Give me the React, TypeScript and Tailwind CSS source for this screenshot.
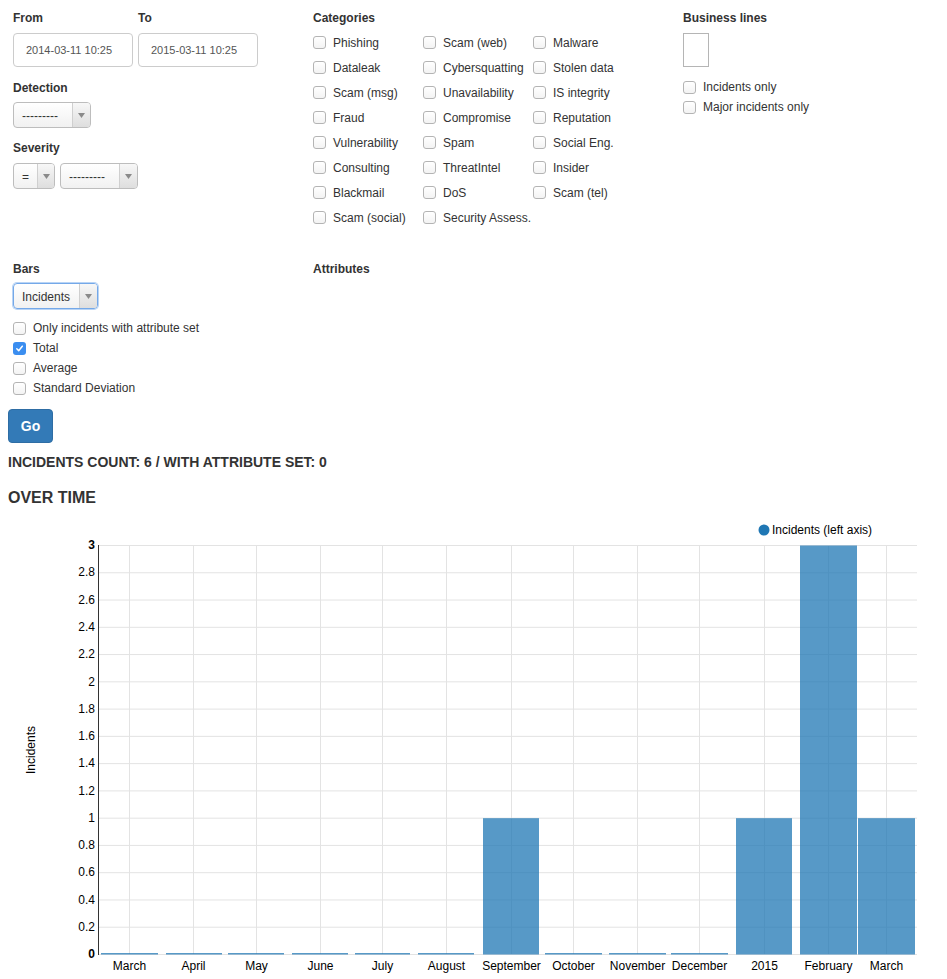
import React from "react";

const font = { fontFamily: '"Liberation Sans", Arial, Helvetica, sans-serif' };

function Check({ checked = false }: { checked?: boolean }) {
  return checked ? (
    <span className="inline-flex h-[13px] w-[13px] shrink-0 items-center justify-center rounded-[3px] bg-[#3b8ef0]">
      <svg width="9" height="9" viewBox="0 0 9 9">
        <path d="M1.8 4.8 L3.7 6.7 L7.3 2.2" fill="none" stroke="#fff" strokeWidth="1.5" strokeLinecap="round" strokeLinejoin="round" />
      </svg>
    </span>
  ) : (
    <span className="inline-block h-[13px] w-[13px] shrink-0 rounded-[3px] border border-[#b4b4b4] bg-gradient-to-b from-white to-[#f3f3f3]" />
  );
}

function CheckRow({ label, checked, h = "h-[25px]" }: { label: string; checked?: boolean; h?: string }) {
  return (
    <div className={`flex items-center gap-[7px] ${h}`}>
      <Check checked={checked} />
      <span className="whitespace-nowrap text-[12px] text-[#333]">{label}</span>
    </div>
  );
}

function Select({ value, w, focus = false }: { value: string; w: string; focus?: boolean }) {
  return (
    <div
      className={`flex h-[26px] ${w} overflow-hidden rounded-[4px] border ${
        focus ? "border-[#74a8e8] shadow-[0_0_0_1px_#b9d4f5]" : "border-[#bdbdbd]"
      } bg-gradient-to-b from-white to-[#f1f1f1]`}
    >
      <div className="flex flex-1 items-center px-[8px] pt-[1px] text-[12px] text-[#333]">{value}</div>
      <div className="flex w-[18px] items-center justify-center border-l border-[#cfcfcf] bg-gradient-to-b from-[#f7f7f7] to-[#dedede]">
        <svg width="7" height="5" viewBox="0 0 7 5">
          <path d="M0 0 L7 0 L3.5 5 Z" fill="#8a8a8a" />
        </svg>
      </div>
    </div>
  );
}

function Label({ children }: { children: React.ReactNode }) {
  return <div className="h-[17px] pt-[1px] text-[12px] font-bold leading-[16px] text-[#333]">{children}</div>;
}

const categories = [
  ["Phishing", "Scam (web)", "Malware"],
  ["Dataleak", "Cybersquatting", "Stolen data"],
  ["Scam (msg)", "Unavailability", "IS integrity"],
  ["Fraud", "Compromise", "Reputation"],
  ["Vulnerability", "Spam", "Social Eng."],
  ["Consulting", "ThreatIntel", "Insider"],
  ["Blackmail", "DoS", "Scam (tel)"],
  ["Scam (social)", "Security Assess.", ""],
];

const bars = [
  { label: "March", x0: 101, x1: 158, c: 129, v: 0 },
  { label: "April", x0: 166, x1: 222, c: 193, v: 0 },
  { label: "May", x0: 228, x1: 284, c: 256, v: 0 },
  { label: "June", x0: 292, x1: 348, c: 320, v: 0 },
  { label: "July", x0: 355, x1: 410, c: 382, v: 0 },
  { label: "August", x0: 418, x1: 474, c: 446, v: 0 },
  { label: "September", x0: 483, x1: 539, c: 511, v: 1 },
  { label: "October", x0: 545, x1: 602, c: 573, v: 0 },
  { label: "November", x0: 609, x1: 666, c: 637, v: 0 },
  { label: "December", x0: 671, x1: 728, c: 699, v: 0 },
  { label: "2015", x0: 736, x1: 792, c: 764, v: 1 },
  { label: "February", x0: 800, x1: 857, c: 828, v: 3 },
  { label: "March", x0: 858, x1: 915, c: 886, v: 1 },
];

function Chart() {
  const top = 36;
  const bottom = 445;
  const left = 98.5;
  const right = 917;
  const y = (v: number) => bottom - (v / 3) * (bottom - top);
  const ticks = Array.from({ length: 16 }, (_, i) => Math.round(i * 2) / 10);
  return (
    <svg width="947" height="470" className="block" style={font}>
      {ticks.map((t) => (
        <line key={"h" + t} x1={left} x2={right} y1={y(t) + 0.5} y2={y(t) + 0.5} stroke="#e3e3e3" />
      ))}
      {bars.map((b, i) => (
        <line key={"v" + i} x1={b.c + 0.5} x2={b.c + 0.5} y1={top} y2={bottom} stroke="#e3e3e3" />
      ))}
      {bars.map((b, i) => {
        const h = b.v === 0 ? 1.5 : (b.v / 3) * (bottom - top);
        return (
          <rect key={"b" + i} x={b.x0} y={bottom - h + 0.5} width={b.x1 - b.x0} height={h} fill="#1f77b4" fillOpacity={0.75} />
        );
      })}
      <line x1={left} x2={left} y1={top} y2={bottom + 1} stroke="#333" />
      {ticks.map((t) => (
        <text
          key={"t" + t}
          x={95}
          y={y(t) + 1}
          textAnchor="end"
          dominantBaseline="middle"
          fontSize="12"
          fontWeight={t === 0 || t === 3 ? "bold" : "normal"}
          fill="#000"
        >
          {t === 0 || t === 1 || t === 2 || t === 3 ? t.toFixed(0) : t.toFixed(1)}
        </text>
      ))}
      {bars.map((b, i) => (
        <text key={"x" + i} x={b.c + 0.5} y={458} textAnchor="middle" dominantBaseline="middle" fontSize="12" fill="#000">
          {b.label}
        </text>
      ))}
      <text x={32} y={241} transform="rotate(-90 32 241)" textAnchor="middle" dominantBaseline="middle" fontSize="12" fill="#000">
        Incidents
      </text>
      <circle cx={764} cy={21} r={5.5} fill="#1f77b4" />
      <text x={772} y={22} dominantBaseline="middle" fontSize="12" fill="#000">
        Incidents (left axis)
      </text>
    </svg>
  );
}

export default function App() {
  return (
    <div className="min-h-[979px] w-[947px] bg-white text-[#333]" style={font}>
      <div className="px-[13px] pt-[9px]">
        <div className="flex">
          {/* filters left */}
          <div className="w-[300px]">
            <div className="flex gap-[5px]">
              <div>
                <div className="mb-[7px]">
                  <Label>From</Label>
                </div>
                <div className="flex h-[34px] w-[120px] items-center rounded-[4px] border border-[#ccc] pl-[12px] pt-[1px] text-[11px] text-[#555]">
                  2014-03-11 10:25
                </div>
              </div>
              <div>
                <div className="mb-[7px]">
                  <Label>To</Label>
                </div>
                <div className="flex h-[34px] w-[120px] items-center rounded-[4px] border border-[#ccc] pl-[12px] pt-[1px] text-[11px] text-[#555]">
                  2015-03-11 10:25
                </div>
              </div>
            </div>
            <div className="mb-[6px] mt-[12px]">
              <Label>Detection</Label>
            </div>
            <Select value="---------" w="w-[78px]" />
            <div className="mb-[7px] mt-[11px]">
              <Label>Severity</Label>
            </div>
            <div className="flex gap-[5px]">
              <Select value="=" w="w-[42px]" />
              <Select value="---------" w="w-[78px]" />
            </div>
          </div>

          {/* categories */}
          <div className="w-[370px]">
            <div className="mb-[4px]">
              <Label>Categories</Label>
            </div>
            <div className="grid grid-cols-[110px_110px_110px]">
              {categories.flat().map((c, i) =>
                c ? <CheckRow key={i} label={c} /> : <div key={i} className="h-[25px]" />
              )}
            </div>
          </div>

          {/* business lines */}
          <div>
            <div className="mb-[7px]">
              <Label>Business lines</Label>
            </div>
            <div className="h-[34px] w-[26px] border border-[#b5b5b5] bg-white" />
            <div className="mt-[10px]">
              <CheckRow label="Incidents only" h="h-[20px]" />
              <CheckRow label="Major incidents only" h="h-[20px]" />
            </div>
          </div>
        </div>

        <div className="mt-[30px] flex">
          <div className="w-[300px]">
            <div className="mb-[6px]">
              <Label>Bars</Label>
            </div>
            <Select value="Incidents" w="w-[85px]" focus />
            <div className="mt-[9px]">
              <CheckRow label="Only incidents with attribute set" h="h-[20px]" />
              <CheckRow label="Total" checked h="h-[20px]" />
              <CheckRow label="Average" h="h-[20px]" />
              <CheckRow label="Standard Deviation" h="h-[20px]" />
            </div>
          </div>
          <div>
            <Label>Attributes</Label>
          </div>
        </div>
      </div>

      <div className="px-[8px]">
        <button className="mt-[11px] h-[34px] w-[45px] rounded-[4px] border border-[#2e6da4] bg-[#337ab7] text-[14px] font-bold text-white">
          Go
        </button>
        <div className="mt-[9px] h-[20px] text-[14px] font-bold leading-[20px] text-[#333]">
          INCIDENTS COUNT: 6 / WITH ATTRIBUTE SET: 0
        </div>
        <div className="mt-[15px] h-[22px] text-[16px] font-bold leading-[22px] text-[#333]">OVER TIME</div>
      </div>

      <Chart />
    </div>
  );
}
